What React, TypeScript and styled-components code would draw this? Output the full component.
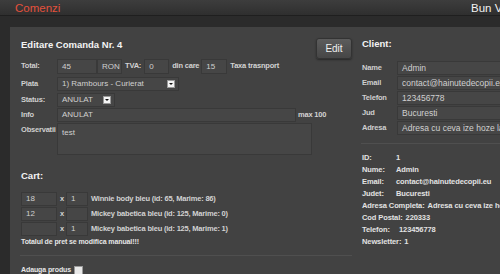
import React from 'react';
import styled, { createGlobalStyle } from 'styled-components';

const GlobalStyle = createGlobalStyle`
  html, body {
    margin: 0;
    padding: 0;
    background: #2c2c2c;
    overflow: hidden;
  }
  body {
    font-family: "Liberation Sans", Arial, sans-serif;
  }
`;

const Page = styled.div`
  width: 500px;
  height: 274px;
  overflow: hidden;
  background: #2b2b2b;
`;

const TopBar = styled.div`
  height: 16px;
  display: flex;
  align-items: center;
  background: linear-gradient(#3d3d3d, #2f2f2f);
  border-bottom: 1px solid #1f1f1f;
  box-sizing: border-box;
  padding-left: 15px;
  white-space: nowrap;
  font-size: 11.5px;
  line-height: 16px;
`;

const Brand = styled.div`
  flex: 0 0 456px;
  color: #e4513c;
`;

const Welcome = styled.div`
  color: #f2f2f2;
`;

const Main = styled.div`
  padding: 11px 0 0 10px;
  background: #2b2b2b;
`;

const Panel = styled.div`
  width: 540px;
  height: 260px;
  background: #424242;
  box-sizing: border-box;
  padding: 11px 0 0 11px;
  display: grid;
  grid-template-columns: 331px 170px;
  column-gap: 10px;
  align-items: start;
`;

const Column = styled.div`
  display: flex;
  flex-direction: column;
`;

const Header = styled.div`
  height: 21px;
  display: flex;
  justify-content: space-between;
  align-items: flex-start;
`;

const Title = styled.h4<{ $mt?: number }>`
  margin: ${(p) => p.$mt ?? 1}px 0 0;
  font-size: 9.5px;
  line-height: 12px;
  font-weight: bold;
  color: #f4f4f4;
`;

const EditButton = styled.button`
  width: 36px;
  height: 21px;
  padding: 0;
  border: 1px solid #333;
  border-radius: 3px;
  background: linear-gradient(#5c5c5c, #464646);
  box-shadow: 0 1px 2px rgba(0, 0, 0, 0.4);
  color: #f0f0f0;
  font-family: "Liberation Sans", Arial, sans-serif;
  font-size: 10px;
`;

const Row = styled.div<{ $mt?: number; $h?: number }>`
  display: flex;
  align-items: flex-start;
  margin-top: ${(p) => p.$mt ?? 0}px;
  height: ${(p) => p.$h ?? 14}px;
`;

const Label = styled.div<{ $w?: number }>`
  flex: 0 0 ${(p) => p.$w ?? 36}px;
  padding-top: 2px;
  font-size: 7.5px;
  line-height: 9px;
  font-weight: bold;
  letter-spacing: -0.2px;
  color: #cfcfcf;
`;

const Field = styled.div<{ $w: number; $h?: number }>`
  width: ${(p) => p.$w}px;
  height: ${(p) => p.$h ?? 14}px;
  box-sizing: border-box;
  background: #464646;
  border: 1px solid #393939;
  padding: 0 3px 0 4px;
  display: flex;
  align-items: ${(p) => (p.$h && p.$h > 20 ? 'flex-start' : 'center')};
  justify-content: space-between;
  font-size: 8px;
  line-height: 12px;
  color: #d0d0d0;
  white-space: nowrap;
  overflow: hidden;
  flex-shrink: 0;
`;

const WideField = styled(Field)`
  font-size: 8.5px;
`;

const Area = styled(Field)`
  padding-top: 3px;
`;

const Arrow = styled.span`
  width: 8px;
  height: 8px;
  background: #f4f4f4;
  border: 1px solid #999;
  box-sizing: border-box;
  display: flex;
  align-items: center;
  justify-content: center;
  &::after {
    content: '';
    border-left: 2px solid transparent;
    border-right: 2px solid transparent;
    border-top: 2px solid #111;
  }
`;

const Inline = styled.span<{ $ml?: number }>`
  margin-left: ${(p) => p.$ml ?? 3}px;
  font-size: 7.5px;
  line-height: 14px;
  font-weight: bold;
  letter-spacing: -0.2px;
  color: #d2d2d2;
  white-space: nowrap;
`;

const Gap = styled.div<{ $w: number }>`
  flex: 0 0 ${(p) => p.$w}px;
`;

const Note = styled.div<{ $mt?: number }>`
  margin-top: ${(p) => p.$mt ?? 0}px;
  font-size: 7px;
  line-height: 10px;
  font-weight: bold;
  letter-spacing: -0.1px;
  color: #e6e6e6;
  display: flex;
  align-items: center;
  gap: 3px;
`;

const Divider = styled.div<{ $mt: number; $ml?: number }>`
  margin-top: ${(p) => p.$mt}px;
  margin-left: ${(p) => p.$ml ?? -1}px;
  height: 1px;
  background: #4f4f4f;
`;

const Checkbox = styled.span`
  width: 7px;
  height: 7px;
  background: #e8e8e8;
  border: 1px solid #999;
`;

const FieldList = styled.div<{ $mt: number }>`
  margin-top: ${(p) => p.$mt}px;
  display: flex;
  flex-direction: column;
  gap: 1px;
`;

const Info = styled.div`
  margin-top: 8px;
  display: flex;
  flex-direction: column;
`;

const InfoLine = styled.div`
  display: flex;
  font-size: 7.5px;
  line-height: 12px;
  font-weight: bold;
  letter-spacing: -0.1px;
  color: #e2e2e2;
  white-space: nowrap;
`;

const InfoKey = styled.span<{ $w?: number }>`
  flex: 0 0 ${(p) => (p.$w ? `${p.$w}px` : 'auto')};
  margin-right: ${(p) => (p.$w ? 0 : 3)}px;
`;

const cart = [
  { price: '18', qty: '1', name: 'Winnie body bleu (id: 65, Marime: 86)' },
  { price: '12', qty: '', name: 'Mickey babetica bleu (id: 125, Marime: 0)' },
  { price: '', qty: '1', name: 'Mickey babetica bleu (id: 125, Marime: 1)' },
];

const client = [
  ['Name', 'Admin'],
  ['Email', 'contact@hainutedecopii.eu'],
  ['Telefon', '123456778'],
  ['Jud', 'Bucuresti'],
  ['Adresa', 'Adresa cu ceva ize hoze lala'],
];

const info: [string, string, number?][] = [
  ['ID:', '1', 34],
  ['Nume:', 'Admin', 34],
  ['Email:', 'contact@hainutedecopii.eu', 34],
  ['Judet:', 'Bucuresti', 34],
  ['Adresa Completa:', 'Adresa cu ceva ize hoze lala'],
  ['Cod Postal:', '220333'],
  ['Telefon:', '123456778', 37],
  ['Newsletter:', '1'],
];

export default function App() {
  return (
    <Page>
      <GlobalStyle />
      <TopBar>
        <Brand>Comenzi</Brand>
        <Welcome>Bun Venit, Admin</Welcome>
      </TopBar>
      <Main>
        <Panel>
          <Column>
            <Header>
              <Title>Editare Comanda Nr. 4</Title>
              <EditButton>Edit</EditButton>
            </Header>

            <Row $h={15}>
              <Label>Total:</Label>
              <Field $w={40} $h={15}>45</Field>
              <Field $w={25} $h={15}>RON</Field>
              <Inline>TVA:</Inline>
              <Gap $w={3} />
              <Field $w={25} $h={15}>0</Field>
              <Inline>din care</Inline>
              <Gap $w={2} />
              <Field $w={26} $h={15}>15</Field>
              <Inline>Taxa trasnport</Inline>
            </Row>

            <Row $mt={3}>
              <Label>Plata</Label>
              <Field $w={122}>
                1) Rambours - Curierat
                <Arrow />
              </Field>
            </Row>

            <Row $mt={2}>
              <Label>Status:</Label>
              <Field $w={58}>
                ANULAT
                <Arrow />
              </Field>
            </Row>

            <Row $mt={1}>
              <Label>Info</Label>
              <Field $w={239}>ANULAT</Field>
              <Inline $ml={2}>max 100</Inline>
            </Row>

            <Row $mt={1} $h={32}>
              <Label>Observatii</Label>
              <Area $w={255} $h={32}>test</Area>
            </Row>

            <Title $mt={15}>Cart:</Title>

            <FieldList $mt={10}>
              {cart.map((item, i) => (
                <Row key={i}>
                  <Field $w={36}>{item.price}</Field>
                  <Inline $ml={3}>x</Inline>
                  <Gap $w={2} />
                  <Field $w={22}>{item.qty}</Field>
                  <Inline>{item.name}</Inline>
                </Row>
              ))}
            </FieldList>

            <Note $mt={1}>Totalul de pret se modifica manual!!!</Note>
            <Divider $mt={8} />
            <Note $mt={9}>
              Adauga produs <Checkbox />
            </Note>
          </Column>

          <Column>
            <Title $mt={0}>Client:</Title>
            <FieldList $mt={11}>
              {client.map(([k, v]) => (
                <Row key={k}>
                  <Label $w={35}>{k}</Label>
                  <WideField $w={130}>{v}</WideField>
                </Row>
              ))}
            </FieldList>
            <Divider $mt={8} />
            <Info>
              {info.map(([k, v, w]) => (
                <InfoLine key={k}>
                  <InfoKey $w={w}>{k}</InfoKey>
                  {v}
                </InfoLine>
              ))}
            </Info>
          </Column>
        </Panel>
      </Main>
    </Page>
  );
}
